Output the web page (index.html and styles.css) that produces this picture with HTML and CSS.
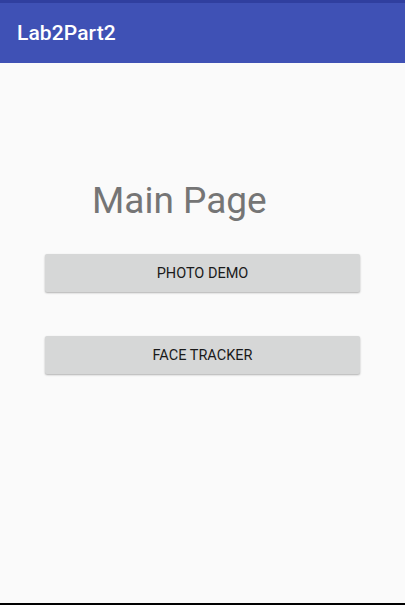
FILE: index.html
```html
<!DOCTYPE html>
<html>
<head>
<meta charset="utf-8">
<link rel="stylesheet" href="styles.css">
</head>
<body>
<div class="status"></div>
<header class="appbar"><span class="title">Lab2Part2</span></header>
<main class="content">
  <h1 class="heading">Main Page</h1>
  <button class="btn btn-first">PHOTO DEMO</button>
  <button class="btn btn-second">FACE TRACKER</button>
</main>
<div class="navbar"></div>
</body>
</html>
```
FILE: styles.css
```css
html, body {
  margin: 0;
  padding: 0;
  height: 100%;
}
body {
  width: 405px;
  height: 605px;
  background: #fafafa;
  font-family: Roboto, "Noto Sans", sans-serif;
  display: flex;
  flex-direction: column;
  overflow: hidden;
}
.status {
  height: 3px;
  background: #303f9f;
  flex: none;
}
.appbar {
  height: 60px;
  background: #3f51b5;
  flex: none;
  display: flex;
  align-items: center;
  padding-left: 17px;
}
.title {
  color: #ffffff;
  font-size: 21px;
  font-weight: 500;
  letter-spacing: 0.1px;
}
.content {
  flex: 1;
  display: flex;
  flex-direction: column;
  align-items: flex-start;
}
.heading {
  margin: 115px 0 0 92px;
  font-size: 37px;
  font-weight: 400;
  color: #757575;
  line-height: 46px;
}
.btn {
  margin-left: 45px;
  width: 315px;
  height: 38px;
  border: none;
  border-radius: 2px;
  background: #d6d7d7;
  box-shadow: 0 1px 2px rgba(0,0,0,0.3);
  font-family: Roboto, "Noto Sans", sans-serif;
  font-size: 14.5px;
  font-weight: 400;
  color: #1a1a1a;
  padding: 0;
}
.btn-first {
  margin-top: 30px;
}
.btn-second {
  margin-top: 44px;
}
.navbar {
  height: 2px;
  background: #000;
  flex: none;
}
```
